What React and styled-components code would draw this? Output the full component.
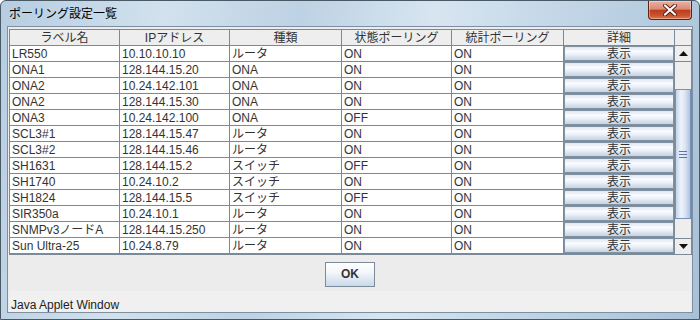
import React from 'react'
import styled, { createGlobalStyle } from 'styled-components'

const GlobalStyle = createGlobalStyle`
	html, body {
		margin: 0;
		padding: 0;
		background: #ffffff;
	}
	* {
		box-sizing: border-box;
	}
`

const FONT = `"Liberation Sans", "Noto Sans CJK JP", sans-serif`
const GRID = '#7b8a99'

const Window = styled.div`
	width: 700px;
	height: 320px;
	display: flex;
	flex-direction: column;
	padding: 0 6px 6px 6px;
	border: 1px solid #4a5966;
	border-radius: 6px 6px 0 0;
	background: linear-gradient(100deg, #b6cde1 0%, #d2e1ed 22%, #bdd2e4 40%, #d7e5f0 58%, #c2d6e7 75%, #a8c1d7 100%);
	font-family: ${FONT};
	overflow: hidden;
`

const TitleBar = styled.div`
	height: 25px;
	display: flex;
	justify-content: space-between;
	align-items: flex-start;
	padding-left: 2px;
`

const Title = styled.span`
	font-size: 12px;
	line-height: 12px;
	margin-top: 7px;
	color: #000;
`

const CloseButton = styled.div`
	width: 44px;
	height: 19px;
	margin-right: 1px;
	display: flex;
	align-items: center;
	justify-content: center;
	border: 1px solid #5e2416;
	border-top: none;
	border-radius: 0 0 4px 4px;
	background: linear-gradient(#eab2a3 0%, #d98a74 45%, #bd3d20 52%, #c9522e 80%, #dd7a4a 100%);
	box-shadow: inset 0 0 0 1px rgba(255, 255, 255, 0.35);
`

const Body = styled.div`
	flex: 1;
	display: flex;
	flex-direction: column;
	border: 1px solid #7d8fa1;
	background: #ececec;
	padding: 2px 1px 0 1px;
`

const TableFrame = styled.div`
	width: 683px;
	border: 1px solid ${GRID};
	background: #ffffff;
`

const HeaderRow = styled.div`
	display: flex;
	height: 16px;
	border-bottom: 1px solid ${GRID};
	background: #eeeeee;
`

const HeaderCell = styled.div`
	width: ${({ $w }) => $w}px;
	flex: none;
	border-right: 1px solid ${({ $last }) => ($last ? 'transparent' : GRID)};
	font-size: 12px;
	line-height: 16px;
	text-align: center;
	color: #333;
	white-space: nowrap;
	overflow: hidden;
`

const Viewport = styled.div`
	display: flex;
	height: 208px;
`

const Rows = styled.div`
	display: flex;
	flex-direction: column;
`

const Row = styled.div`
	display: flex;
	height: 16px;
	border-bottom: 1px solid ${GRID};
`

const Cell = styled.div`
	width: ${({ $w }) => $w}px;
	flex: none;
	border-right: 1px solid ${GRID};
	padding-left: 2px;
	font-size: 12px;
	line-height: 16px;
	color: #333;
	white-space: nowrap;
	overflow: hidden;
`

const ButtonCell = styled.div`
	width: ${({ $w }) => $w}px;
	flex: none;
	border-right: 1px solid ${GRID};
	display: flex;
`

const DetailButton = styled.div`
	flex: 1;
	border: 1px solid #8192a3;
	background: linear-gradient(#dce6f1 0%, #fbfcfe 35%, #e9eff6 60%, #c1d2e6 100%);
	font-size: 12px;
	line-height: 14px;
	text-align: center;
	color: #333;
	overflow: hidden;
`

const ScrollBar = styled.div`
	width: 16px;
	display: flex;
	flex-direction: column;
	background: #eeeeee;
`

const ArrowButton = styled.div`
	height: 16px;
	flex: none;
	display: flex;
	align-items: center;
	justify-content: center;
	background: #eeeeee;
	border-bottom: ${({ $up }) => ($up ? `1px solid ${GRID}` : 'none')};
	border-top: ${({ $up }) => ($up ? 'none' : `1px solid ${GRID}`)};
`

const Track = styled.div`
	flex: 1;
	display: flex;
	flex-direction: column;
	background: #eeeeee;
`

const Thumb = styled.div`
	margin-top: 27px;
	height: 130px;
	border: 1px solid #7890b8;
	background: linear-gradient(90deg, #c4d4ea 0%, #eef3fa 35%, #dbe5f2 65%, #aec3df 100%);
	display: flex;
	flex-direction: column;
	align-items: center;
	justify-content: center;
	gap: 2px;
`

const Grip = styled.div`
	width: 8px;
	height: 1px;
	background: #5874aa;
`

const ButtonBar = styled.div`
	display: flex;
	justify-content: center;
	padding-top: 7px;
	height: 36px;
`

const OkButton = styled.div`
	width: 50px;
	height: 25px;
	border: 1px solid #7a8a99;
	background: linear-gradient(#ffffff 0%, #f4f7fb 40%, #c9d8ea 100%);
	font-size: 12px;
	font-weight: bold;
	line-height: 23px;
	text-align: center;
	color: #333;
`

const StatusStrip = styled.div`
	flex: 1;
	background: #f0f0f0;
	font-size: 12px;
	line-height: 12px;
	color: #222;
	padding: 8px 0 0 2px;
`

const COLS = [110, 110, 112, 110, 112, 111]
const HEADERS = ['ラベル名', 'IPアドレス', '種類', '状態ポーリング', '統計ポーリング', '詳細']

const ROWS = [
	['LR550', '10.10.10.10', 'ルータ', 'ON', 'ON'],
	['ONA1', '128.144.15.20', 'ONA', 'ON', 'ON'],
	['ONA2', '10.24.142.101', 'ONA', 'ON', 'ON'],
	['ONA2', '128.144.15.30', 'ONA', 'ON', 'ON'],
	['ONA3', '10.24.142.100', 'ONA', 'OFF', 'ON'],
	['SCL3#1', '128.144.15.47', 'ルータ', 'ON', 'ON'],
	['SCL3#2', '128.144.15.46', 'ルータ', 'ON', 'ON'],
	['SH1631', '128.144.15.2', 'スイッチ', 'OFF', 'ON'],
	['SH1740', '10.24.10.2', 'スイッチ', 'ON', 'ON'],
	['SH1824', '128.144.15.5', 'スイッチ', 'OFF', 'ON'],
	['SIR350a', '10.24.10.1', 'ルータ', 'ON', 'ON'],
	['SNMPv3ノードA', '128.144.15.250', 'ルータ', 'ON', 'ON'],
	['Sun Ultra-25', '10.24.8.79', 'ルータ', 'ON', 'ON'],
]

function Arrow({ up }) {
	return (
		<svg width='9' height='5' viewBox='0 0 9 5'>
			<polygon points={up ? '0,5 9,5 4.5,0' : '0,0 9,0 4.5,5'} fill='#111' />
		</svg>
	)
}

export default function App() {
	return (
		<>
			<GlobalStyle />
			<Window>
				<TitleBar>
					<Title>ポーリング設定一覧</Title>
					<CloseButton>
						<svg width='14' height='12' viewBox='0 0 14 12'>
							<path d='M2 1.5 L12 10.5 M12 1.5 L2 10.5' stroke='#5a1e10' strokeWidth='4' strokeLinecap='round' />
							<path d='M2 1.5 L12 10.5 M12 1.5 L2 10.5' stroke='#ffffff' strokeWidth='2.2' strokeLinecap='round' />
						</svg>
					</CloseButton>
				</TitleBar>
				<Body>
					<TableFrame>
						<HeaderRow>
							{HEADERS.map((h, i) => (
								<HeaderCell key={i} $w={COLS[i]}>
									{h}
								</HeaderCell>
							))}
							<HeaderCell $w={16} $last />
						</HeaderRow>
						<Viewport>
							<Rows>
								{ROWS.map((r, i) => (
									<Row key={i}>
										{r.map((v, j) => (
											<Cell key={j} $w={COLS[j]}>
												{v}
											</Cell>
										))}
										<ButtonCell $w={COLS[5]}>
											<DetailButton>表示</DetailButton>
										</ButtonCell>
									</Row>
								))}
							</Rows>
							<ScrollBar>
								<ArrowButton $up>
									<Arrow up />
								</ArrowButton>
								<Track>
									<Thumb>
										<Grip />
										<Grip />
										<Grip />
									</Thumb>
								</Track>
								<ArrowButton>
									<Arrow />
								</ArrowButton>
							</ScrollBar>
						</Viewport>
					</TableFrame>
					<ButtonBar>
						<OkButton>OK</OkButton>
					</ButtonBar>
					<StatusStrip>Java Applet Window</StatusStrip>
				</Body>
			</Window>
		</>
	)
}
